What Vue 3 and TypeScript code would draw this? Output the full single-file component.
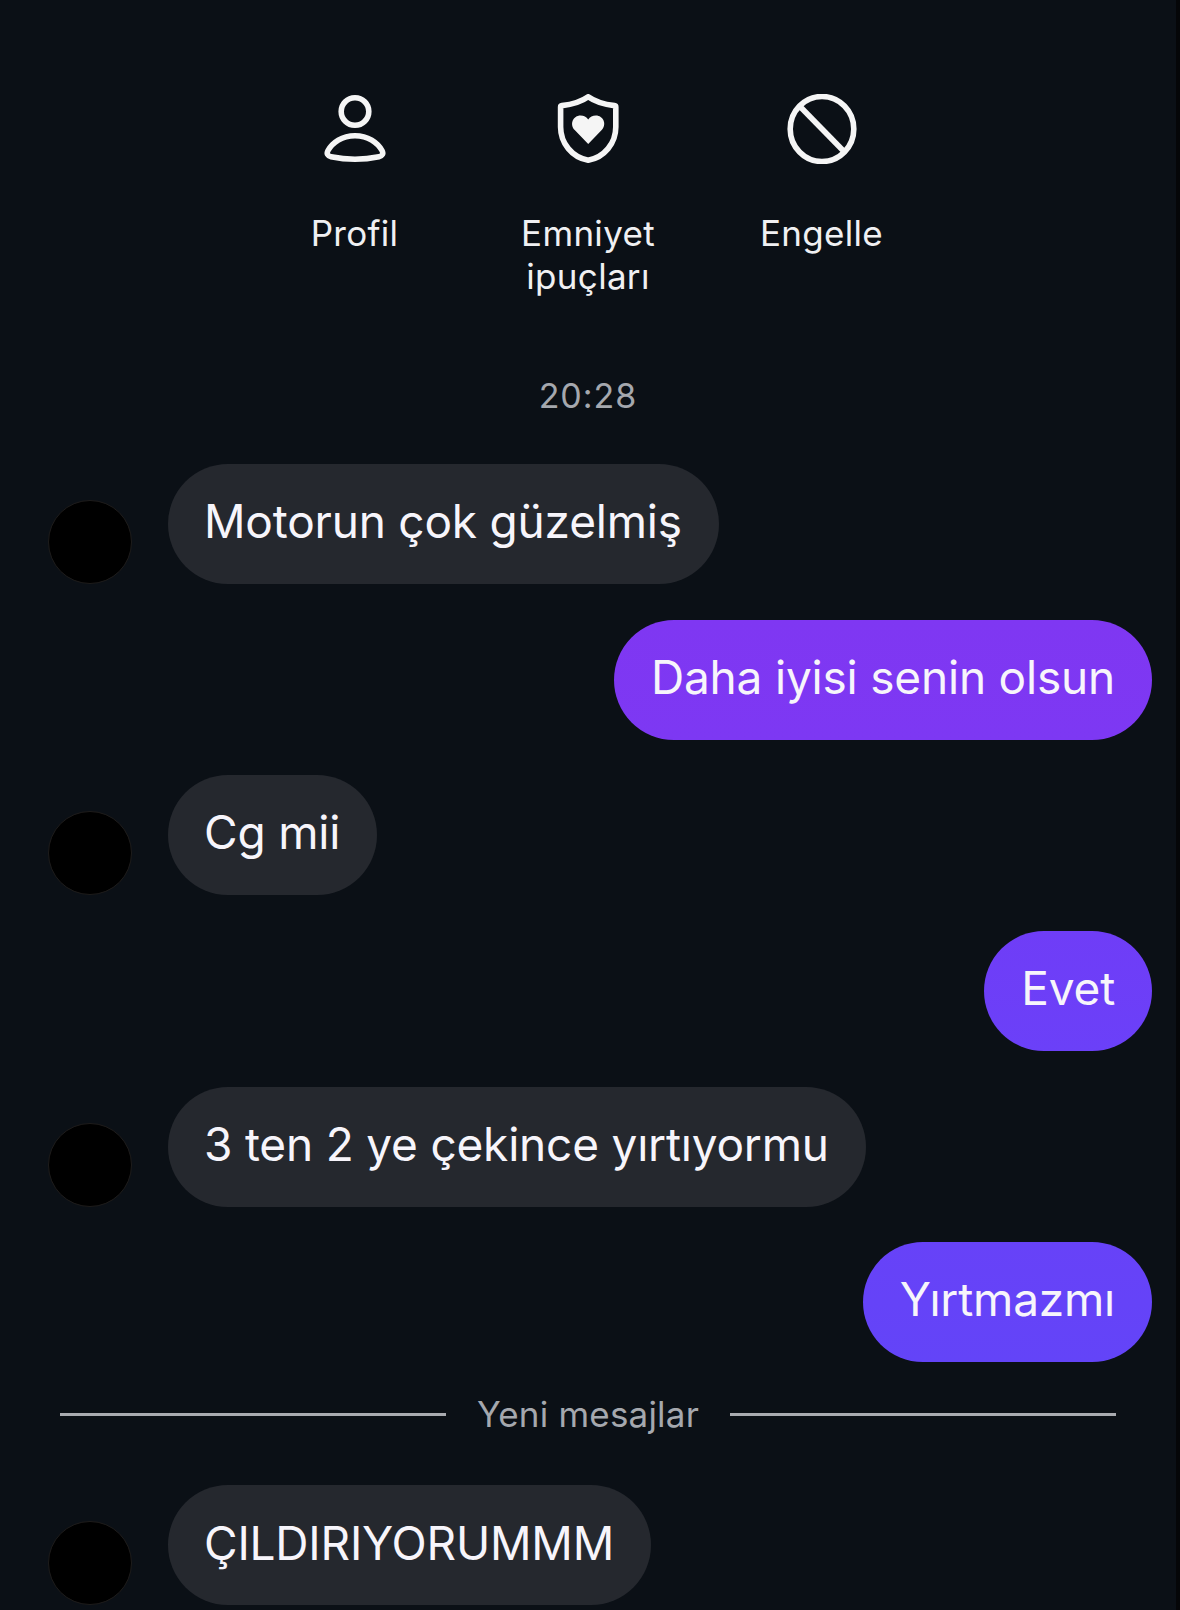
<script setup lang="ts">
interface Msg { text: string; mine: boolean; tone?: string }
const before: Msg[] = [
  { text: 'Motorun çok güzelmiş', mine: false },
  { text: 'Daha iyisi senin olsun', mine: true, tone: 'tone-a' },
  { text: 'Cg mii', mine: false },
  { text: 'Evet', mine: true, tone: 'tone-b' },
  { text: '3 ten 2 ye çekince yırtıyormu', mine: false },
  { text: 'Yırtmazmı', mine: true, tone: 'tone-c' },
]
</script>

<template>
  <div class="page">
    <div class="actions">
      <div class="action">
        <svg class="icon" viewBox="0 0 70 70" fill="none" stroke="#f5f5f5" stroke-width="5.6">
          <ellipse cx="35" cy="17.500" rx="13.800" ry="13.800" />
          <path d="M35 41.700C22 41.700 12.500 48.500 8 56.500c-1.800 3.200-.3 5.500 3 6.200 15.500 3.200 32.500 3.200 48 0 3.300-.7 4.800-3 3-6.200C57.500 48.500 48 41.700 35 41.700z" stroke-linejoin="round" />
        </svg>
        <span class="label">Profil</span>
      </div>
      <div class="action">
        <svg class="icon" viewBox="0 0 70 70" fill="none">
          <path d="M35.200 2.800c6.500 4.700 15 7.600 26.300 8.800.9.100 1.300.6 1.300 1.400v20c0 16.300-11.400 30.300-27.600 33.300-16.200-3-27.600-17-27.600-33.300v-20c0-.8.400-1.300 1.300-1.400 11.300-1.200 19.800-4.100 26.300-8.800z" stroke="#f5f5f5" stroke-width="5.600" stroke-linejoin="round" />
          <path d="M35.200 50 21.700 36c-5.500-5.800-1.500-14.500 5.800-14.500 3.300 0 6 1.500 7.700 4 1.700-2.500 4.400-4 7.700-4 7.300 0 11.300 8.700 5.800 14.500z" fill="#f5f5f5" />
        </svg>
        <span class="label">Emniyet<br />ipuçları</span>
      </div>
      <div class="action">
        <svg class="icon" viewBox="0 0 70 70" fill="none" stroke="#f5f5f5" stroke-width="5.600">
          <ellipse cx="35" cy="35" rx="31.800" ry="32.500" />
          <path d="M12.500 12 57.500 58" />
        </svg>
        <span class="label">Engelle</span>
      </div>
    </div>

    <div class="time">20:28</div>

    <div class="thread">
      <div v-for="m in before" :key="m.text" class="row" :class="{ mine: m.mine }">
        <span v-if="!m.mine" class="avatar"></span>
        <div class="bubble" :class="m.mine ? m.tone : 'theirs'">{{ m.text }}</div>
      </div>
    </div>

    <div class="divider">
      <span class="rule"></span>
      <span class="divider-text">Yeni mesajlar</span>
      <span class="rule"></span>
    </div>

    <div class="row last">
      <span class="avatar"></span>
      <div class="bubble theirs">ÇILDIRIYORUMMM</div>
    </div>
  </div>
</template>

<style>
html, body { margin: 0; background: #0b1016; }
</style>

<style scoped>
.page {
  box-sizing: border-box;
  width: 1180px;
  height: 1610px;
  overflow: hidden;
  background: #0b1016;
  border-right: 4px solid #050608;
  padding-top: 94px;
  font-family: Inter, "Noto Sans", sans-serif;
  color: #f5f5f5;
}
.actions {
  display: flex;
  justify-content: center;
}
.action {
  width: 233.5px;
  display: flex;
  flex-direction: column;
  align-items: center;
}
.icon { width: 70px; height: 70px; display: block; }
.label {
  margin-top: 48px;
  font-size: 35px;
  letter-spacing: .3px;
  line-height: 43px;
  text-align: center;
  color: #f0f0f2;
}
.time {
  margin-top: 76px;
  text-align: center;
  font-size: 34px;
  line-height: 43px;
  color: #a5a8ae;
  letter-spacing: 1px;
}
.thread {
  margin-top: 47px;
  display: flex;
  flex-direction: column;
  gap: 35.7px;
}
.row {
  display: flex;
  align-items: flex-end;
  padding-left: 48px;
  padding-right: 24px;
}
.row.mine { justify-content: flex-end; }
.avatar {
  flex: none;
  width: 84px;
  height: 84px;
  box-sizing: border-box;
  border-radius: 50%;
  background: #000;
  border: 1px solid #1e1c1b;
  margin-right: 36px;
}
.bubble {
  box-sizing: border-box;
  height: 120px;
  border-radius: 60px;
  padding: 0 37px;
  font-size: 46px;
  letter-spacing: -.2px;
  line-height: 115px;
  color: #f7f5fb;
  white-space: nowrap;
}
.theirs { background: #25282e; padding: 0 37px 0 36px; }
.tone-a { background: linear-gradient(#7f37f2, #7d38f3); }
.tone-b { background: linear-gradient(#6f3df7, #6b40f8); }
.tone-c { background: linear-gradient(#6742f8, #6344f8); }
.divider {
  margin-top: 31px;
  height: 43px;
  display: flex;
  align-items: center;
  padding: 0 60px;
}
.rule { flex: 1; height: 3px; background: #a9abb0; }
.divider-text {
  padding: 0 31px;
  font-size: 35px;
  letter-spacing: .2px;
  line-height: 43px;
  color: #a5a8ae;
}
.last { margin-top: 49px; }
.last .bubble { line-height: 116px; }
</style>
